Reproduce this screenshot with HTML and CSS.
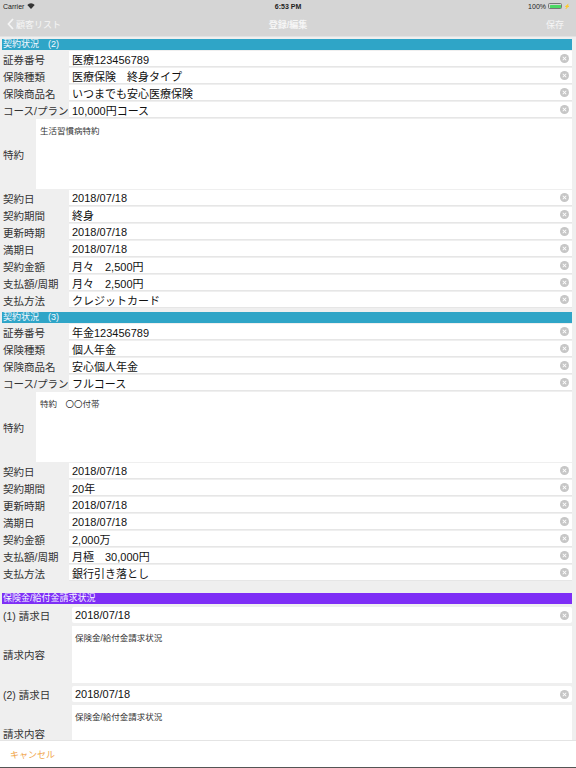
FILE: index.html
```html
<!DOCTYPE html>
<html lang="ja">
<head>
  <meta charset="UTF-8" />
  <meta name="viewport" content="width=device-width, initial-scale=1.0"/>
  <title>登録/編集</title>
  <link rel="stylesheet" href="styles.css">
</head>
<body>

  <!-- ステータスバー -->
  <div class="statusbar">
    <span class="carrier">Carrier
      <svg class="wifi" width="8" height="6" viewBox="0 0 8 6"><path d="M0.3 2 A5 5 0 0 1 7.7 2 L4 6 Z" fill="#333"/></svg>
    </span>
    <span class="clock">6:53 PM</span>
    <span class="battery">100%
      <span class="batt"><span class="batt-fill"></span></span><span class="bolt">⚡</span>
    </span>
  </div>

  <!-- ナビゲーション -->
  <div class="navbar">
    <div class="nav-back">
      <svg width="7" height="12" viewBox="0 0 7 12"><path d="M6 1 L1.5 6 L6 11" fill="none" stroke="#f4f4f4" stroke-width="1.8"/></svg>
      <span>顧客リスト</span>
    </div>
    <div class="nav-title">登録/編集</div>
    <div class="nav-save">保存</div>
  </div>

  <div class="content">

    <div class="section-head">契約状況　(2)</div>
    <div class="row"><div class="label">証券番号</div><div class="field"><span>医療123456789</span><i class="clear"></i></div></div>
    <div class="row"><div class="label">保険種類</div><div class="field"><span>医療保険　終身タイプ</span><i class="clear"></i></div></div>
    <div class="row"><div class="label">保険商品名</div><div class="field"><span>いつまでも安心医療保険</span><i class="clear"></i></div></div>
    <div class="row"><div class="label">コース/プラン</div><div class="field"><span>10,000円コース</span><i class="clear"></i></div></div>
    <div class="memo"><div class="label">特約</div><div class="memo-box">生活習慣病特約</div></div>
    <div class="row"><div class="label">契約日</div><div class="field"><span>2018/07/18</span><i class="clear"></i></div></div>
    <div class="row"><div class="label">契約期間</div><div class="field"><span>終身</span><i class="clear"></i></div></div>
    <div class="row"><div class="label">更新時期</div><div class="field"><span>2018/07/18</span><i class="clear"></i></div></div>
    <div class="row"><div class="label">満期日</div><div class="field"><span>2018/07/18</span><i class="clear"></i></div></div>
    <div class="row"><div class="label">契約金額</div><div class="field"><span>月々　2,500円</span><i class="clear"></i></div></div>
    <div class="row"><div class="label">支払額/周期</div><div class="field"><span>月々　2,500円</span><i class="clear"></i></div></div>
    <div class="row"><div class="label">支払方法</div><div class="field"><span>クレジットカード</span><i class="clear"></i></div></div>

    <div class="section-head next">契約状況　(3)</div>
    <div class="row"><div class="label">証券番号</div><div class="field"><span>年金123456789</span><i class="clear"></i></div></div>
    <div class="row"><div class="label">保険種類</div><div class="field"><span>個人年金</span><i class="clear"></i></div></div>
    <div class="row"><div class="label">保険商品名</div><div class="field"><span>安心個人年金</span><i class="clear"></i></div></div>
    <div class="row"><div class="label">コース/プラン</div><div class="field"><span>フルコース</span><i class="clear"></i></div></div>
    <div class="memo"><div class="label">特約</div><div class="memo-box">特約　〇〇付帯</div></div>
    <div class="row"><div class="label">契約日</div><div class="field"><span>2018/07/18</span><i class="clear"></i></div></div>
    <div class="row"><div class="label">契約期間</div><div class="field"><span>20年</span><i class="clear"></i></div></div>
    <div class="row"><div class="label">更新時期</div><div class="field"><span>2018/07/18</span><i class="clear"></i></div></div>
    <div class="row"><div class="label">満期日</div><div class="field"><span>2018/07/18</span><i class="clear"></i></div></div>
    <div class="row"><div class="label">契約金額</div><div class="field"><span>2,000万</span><i class="clear"></i></div></div>
    <div class="row"><div class="label">支払額/周期</div><div class="field"><span>月極　30,000円</span><i class="clear"></i></div></div>
    <div class="row"><div class="label">支払方法</div><div class="field"><span>銀行引き落とし</span><i class="clear"></i></div></div>

    <!-- 請求状況 -->
    <div class="section-head claim">保険金/給付金請求状況</div>
    <div class="claims">
      <div class="row claim-row"><div class="label">(1) 請求日</div><div class="field"><span>2018/07/18</span><i class="clear"></i></div></div>
      <div class="memo claim-memo"><div class="label">請求内容</div><div class="memo-box">保険金/給付金請求状況</div></div>
      <div class="row claim-row"><div class="label">(2) 請求日</div><div class="field"><span>2018/07/18</span><i class="clear"></i></div></div>
      <div class="memo claim-memo last"><div class="label">請求内容</div><div class="memo-box">保険金/給付金請求状況</div></div>
    </div>
  </div>

  <div class="toolbar">
    <span class="cancel">キャンセル</span>
  </div>

</body>
</html>
```

FILE: styles.css
```css
:root {
  --bar-bg: #d5d5d5;
  --page-bg: #efefef;
  --teal: #2fa5c7;
  --purple: #7e2ef6;
  --label-color: #333;
  --orange: #f0a64c;
}

* {
  box-sizing: border-box;
}

body, html {
  margin: 0;
  padding: 0;
  width: 576px;
  height: 768px;
  overflow: hidden;
  background-color: var(--page-bg);
  font-family: 'Liberation Sans', 'Noto Sans CJK JP', sans-serif;
  color: #111;
}

body {
  display: flex;
  flex-direction: column;
}

/* status bar */
.statusbar {
  height: 12px;
  background-color: var(--bar-bg);
  display: flex;
  align-items: center;
  justify-content: space-between;
  padding: 0 6px 0 3px;
  font-size: 7px;
  color: #222;
  position: relative;
}

.carrier {
  display: flex;
  align-items: center;
  gap: 3px;
}

.clock {
  position: absolute;
  left: 0;
  right: 0;
  text-align: center;
  font-weight: bold;
}

.battery {
  display: flex;
  align-items: center;
  gap: 2px;
}

.batt {
  width: 14px;
  height: 6px;
  border: 1px solid #777;
  border-radius: 1.5px;
  padding: 0.5px;
  display: flex;
}

.batt-fill {
  flex: 1;
  background-color: #4cd964;
  border-radius: 0.5px;
}

.bolt {
  font-size: 5px;
  color: #333;
}

/* navigation */
.navbar {
  height: 25px;
  background-color: var(--bar-bg);
  display: flex;
  align-items: center;
  justify-content: space-between;
  padding: 0 12px 0 7px;
  font-size: 9px;
  color: #f6f6f6;
  position: relative;
  border-bottom: 1px solid #e2e2e2;
}

.nav-back {
  display: flex;
  align-items: center;
  gap: 2px;
}

.nav-title {
  position: absolute;
  left: 0;
  right: 0;
  text-align: center;
  font-weight: bold;
}

/* form */
.content {
  flex: 1;
  overflow: hidden;
  padding: 2px 4px 0 2px;
}

.section-head {
  height: 11px;
  line-height: 11px;
  font-size: 9px;
  color: #f4f8ff;
  background-color: var(--teal);
  padding-left: 1px;
  margin-bottom: 1px;
}

.section-head.next {
  margin-top: 4px;
}

.section-head.claim {
  margin-top: 12px;
  background-color: var(--purple);
  margin-bottom: 3px;
}

.row {
  display: flex;
  height: 16px;
  margin-bottom: 1px;
}

.label {
  width: 67px;
  flex-shrink: 0;
  font-size: 10.5px;
  color: var(--label-color);
  padding-left: 1px;
  display: flex;
  align-items: center;
  white-space: nowrap;
}

.field {
  flex: 1;
  background-color: #fff;
  display: flex;
  align-items: center;
  justify-content: space-between;
  padding: 0 3px 0 3px;
  font-size: 11px;
  border-bottom: 1px solid #e6e6e6;
}

.clear {
  width: 9px;
  height: 9px;
  border-radius: 50%;
  background-color: #c6c6c6;
  position: relative;
}

.clear::before,
.clear::after {
  content: '';
  position: absolute;
  left: 2px;
  top: 4px;
  width: 5px;
  height: 1px;
  background-color: #fff;
  transform: rotate(45deg);
}

.clear::after {
  transform: rotate(-45deg);
}

.memo {
  display: flex;
  height: 70px;
  margin-bottom: 1px;
}

.memo .label {
  width: 34px;
}

.memo-box {
  flex: 1;
  background-color: #fff;
  font-size: 8.5px;
  color: #333;
  padding: 5px 4px;
}

/* claims */
.claim-row {
  height: 16px;
  margin-bottom: 3px;
}

.claim-row .label,
.claim-memo .label {
  width: 70px;
}

.claim-row .field {
  border-radius: 2px;
  border-bottom: none;
}

.claim-memo {
  height: 57px;
  margin-bottom: 3px;
}

.claim-memo.last .label {
  align-items: flex-start;
  padding-top: 21px;
}

.claim-memo .memo-box {
  padding-top: 5px;
  padding-left: 3px;
}

/* bottom toolbar */
.toolbar {
  height: 28px;
  background-color: #fff;
  border-top: 1px solid #e4e4e4;
  border-bottom: 1px solid #555;
  display: flex;
  align-items: center;
  padding-left: 10px;
  font-size: 9px;
  flex-shrink: 0;
}

.cancel {
  color: var(--orange);
}
```
